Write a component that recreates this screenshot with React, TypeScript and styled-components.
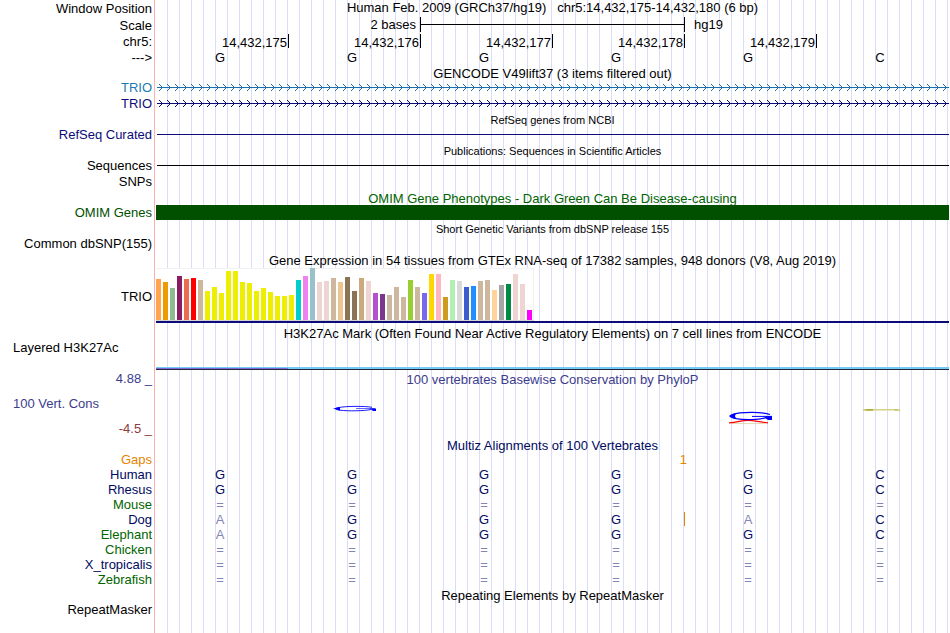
import React from "react";
import styled, { createGlobalStyle } from "styled-components";

const NAVY = "#0c0c78";
const DEEP = "#000a5f";
const GREEN = "#006400";
const ORANGE = "#e58400";

const GlobalStyle = createGlobalStyle`
  body {
    margin: 0;
    background: #fff;
    color: #000;
    font: 13px/15px "Liberation Sans", Arial, Helvetica, sans-serif;
  }
`;

const Page = styled.main`
  box-sizing: border-box;
  min-height: 100vh;
  padding-right: 1px;
  background:
    linear-gradient(#ffb0b0, #ffb0b0) 154px 0 / 1px 100% no-repeat,
    repeating-linear-gradient(to right, transparent 0 11px, #dcdcf6 11px 12px) 156px 0 no-repeat;
`;

const Row = styled.section<{ $height?: number }>`
  display: grid;
  grid-template-columns: 156px minmax(0, 1fr);
  min-height: ${(p) => p.$height ?? 16}px;
`;

const Label = styled.div<{ $color?: string; $line?: number; $middle?: boolean }>`
  padding-right: 4px;
  text-align: right;
  white-space: nowrap;
  color: ${(p) => p.$color ?? "inherit"};
  line-height: ${(p) => p.$line ?? 15}px;
  align-self: ${(p) => (p.$middle ? "center" : "start")};
`;

const SideLabel = styled.div<{ $color?: string }>`
  padding-left: 13px;
  color: ${(p) => p.$color ?? "inherit"};
`;

const Title = styled.h2<{ $small?: boolean; $color?: string }>`
  margin: 0;
  font-size: ${(p) => (p.$small ? 11 : 13)}px;
  font-weight: 400;
  height: 15px;
  line-height: ${(p) => (p.$small ? 16 : 17)}px;
  text-align: center;
  white-space: pre;
  color: ${(p) => p.$color ?? "inherit"};
`;

const WindowTitle = styled(Title)`
  line-height: 15px;
`;

const Bases = styled.div`
  display: grid;
  grid-template-columns: repeat(6, minmax(0, 1fr));
  padding-left: 1px;
`;

const ScaleText = styled.span<{ $end?: boolean }>`
  grid-column: span 2;
  padding: ${(p) => (p.$end ? "0 5px 0 0" : "0 0 0 9px")};
  text-align: ${(p) => (p.$end ? "right" : "left")};
`;

const ScaleBar = styled.span`
  grid-column: span 2;
  display: flex;
  align-items: center;
  height: 15px;
  margin-left: -1px;
  border: solid #000;
  border-width: 0 1px;

  &::before {
    content: "";
    flex: 1;
    height: 1px;
    background: #000;
  }
`;

const Coordinate = styled.span`
  height: 14px;
  line-height: 17px;
  padding-right: 1px;
  border-right: 1px solid #000;
  text-align: right;
`;

const Base = styled.span`
  padding-right: 6px;
  line-height: 15px;
  text-align: center;
`;

const Solid = styled.div<{ $color: string }>`
  height: 1px;
  margin: 7px 0 0 1px;
  background: ${(p) => p.$color};
`;

const ArrowSvg = styled.svg`
  display: block;
  width: calc(100% - 1px);
  height: 15px;
  margin-left: 1px;
`;

const OmimBar = styled.div`
  height: 15px;
  background: #005000;
`;

const Expression = styled.div`
  padding-top: 1px;
  border-bottom: 2px solid ${NAVY};
  margin-bottom: 2px;
`;

const Bars = styled.div`
  display: flex;
  align-items: flex-end;
  gap: 2px;
  width: max-content;
  height: 52px;
  padding-right: 2px;
  background: #fff;
  border-bottom: 1px solid #d4d4d4;
  box-shadow: inset 0 1px #f2f2f2, inset -1px 0 #f2f2f2;
`;

const Bar = styled.span`
  width: 5px;
`;

const Signal = styled.div`
  display: grid;
  grid-template-columns: minmax(0, 1fr) minmax(0, 5fr);
  align-self: end;
  margin-bottom: 1px;
  border-bottom: 1px solid #26263a;
`;

const SignalPart = styled.span<{ $lower: string }>`
  height: 1px;
  background: #73cbf7;
  border-bottom: 1px solid ${(p) => p.$lower};
`;

const ConservationLabels = styled.div`
  display: flex;
  flex-direction: column;
  justify-content: space-between;
  padding: 10px 0 1px;
`;

const LowerLimit = styled(Label)`
  align-self: end;
`;

const LogoCell = styled.div`
  display: flex;
  justify-content: center;
`;

const Alignment = styled.table`
  width: 100%;
  table-layout: fixed;
  border-collapse: collapse;
`;

const Species = styled.th<{ $color: string }>`
  padding: 0 5px 0 0;
  font-weight: 400;
  text-align: right;
  color: ${(p) => p.$color};
`;

const SpeciesColumn = styled.col`
  width: 157px;
`;

const AlignedBase = styled.td<{ $faint?: boolean }>`
  position: relative;
  height: 15px;
  padding: 0 6px 0 0;
  text-align: center;
  color: ${(p) => (p.$faint ? "#8585b5" : DEEP)};
`;

const GapCount = styled.span`
  position: absolute;
  top: 0;
  right: -2px;
  color: ${ORANGE};
`;

const Insertion = styled.span`
  position: absolute;
  top: 0;
  right: 0;
  width: 1px;
  height: 14px;
  background: ${ORANGE};
`;

const sequence = ["G", "G", "G", "G", "G", "C"];
const coordinates = ["14,432,175", "14,432,176", "14,432,177", "14,432,178", "14,432,179"];

const brain = "#eeee00";
const tan = "#cdb79e";
const rose = "#eed5d2";

const tissues: [number, string][] = [
  [41, "#ffa54f"], [38, "#ee9a00"], [32, "#8fbc8f"], [44, "#8b1c62"], [41, "#ee6a50"],
  [42, "#ff0000"], [40, tan], [29, brain], [33, brain], [27, brain], [49, brain],
  [49, brain], [38, brain], [37, brain], [29, brain], [32, brain], [28, brain],
  [24, brain], [24, brain], [25, brain], [40, "#00cdcd"], [44, "#ee82ee"], [52, "#9ac0cd"],
  [38, rose], [39, rose], [42, tan], [38, "#eec591"], [43, "#8b7355"], [29, "#8b7355"],
  [42, "#cdaa7d"], [39, rose], [27, "#b452cd"], [26, "#7a378b"], [25, tan], [33, tan],
  [23, tan], [40, "#9acd32"], [33, tan], [27, "#7a67ee"], [46, "#ffd700"], [46, "#ffb6c1"],
  [23, "#cd9b1d"], [40, "#b4eeb4"], [39, "#d9d9d9"], [33, "#3a5fcd"], [34, "#1e90ff"],
  [39, tan], [40, tan], [30, "#ffd39b"], [35, "#a6a6a6"], [36, "#008b45"], [46, rose],
  [36, rose], [10, "#ff00ff"],
];

const species: { name: string; color: string; bases: string; insertion?: boolean }[] = [
  { name: "Human", color: DEEP, bases: "GGGGGC" },
  { name: "Rhesus", color: DEEP, bases: "GGGGGC" },
  { name: "Mouse", color: GREEN, bases: "======" },
  { name: "Dog", color: DEEP, bases: "AGGGAC", insertion: true },
  { name: "Elephant", color: GREEN, bases: "AGGGGC" },
  { name: "Chicken", color: GREEN, bases: "======" },
  { name: "X_tropicalis", color: DEEP, bases: "======" },
  { name: "Zebrafish", color: GREEN, bases: "======" },
];

function TitleRow({ text, small, color, label, labelColor }: {
  text: string; small?: boolean; color?: string; label?: string; labelColor?: string;
}) {
  return (
    <Row $height={15}>
      <Label $color={labelColor}>{label}</Label>
      <Title $small={small} $color={color}>{text}</Title>
    </Row>
  );
}

function Arrows({ color, id }: { color: string; id: string }) {
  return (
    <ArrowSvg shapeRendering="crispEdges" aria-hidden="true">
      <defs>
        <pattern id={id} width="8" height="15" patternUnits="userSpaceOnUse">
          <path
            fill={color}
            d="M0 7h8v1H0zM2 4h1v1H2zM3 5h1v1H3zM4 6h1v1H4zM4 8h1v1H4zM3 9h1v1H3zM2 10h1v1H2z"
          />
        </pattern>
      </defs>
      <rect width="100%" height="15" fill={`url(#${id})`} />
    </ArrowSvg>
  );
}

function Conservation({ column }: { column: number }) {
  return (
    <LogoCell>
      <svg width="44" height="51" viewBox="0 0 44 51" fill="none" aria-hidden="true">
        {column === 1 && (
          <g stroke="#0000ff">
            <path d="M39 21.3C32 20 12 20 5 21.7C1 22.6 2 23.6 7 24.2C15 25.2 31 25 38 23.5" strokeWidth="0.9" />
            <path d="M23 22.5H42" strokeWidth="0.6" />
            <path d="M37 22.4H43V25H40z" fill="#0000ff" stroke="none" />
            <path d="M0 22.5L7 21V24.5z" fill="#0000ff" stroke="none" />
          </g>
        )}
        {column === 4 && (
          <>
            <path d="M2 37.6H37" stroke="#c8c078" strokeWidth="0.6" />
            <path d="M0 36.8C9 36.4 12 34.4 19 34.4S30 36.4 39 36.8" stroke="#ff0000" strokeWidth="1.2" />
            <g stroke="#0000ff">
              <path d="M41 28.5C35 25.7 10 25.8 4 28.5C1 30 2 31.5 7 32.6C15 34 31 34 37 31.5" strokeWidth="1.2" />
              <path d="M23 30.4H43" />
              <path d="M37 30H43V34H39L36 32z" fill="#0000ff" stroke="none" />
              <path d="M0 30Q2 27.5 8 27Q4 30 8 33Q2 32.5 0 30z" fill="#0000ff" stroke="none" />
            </g>
          </>
        )}
        {column === 5 && (
          <>
            <path d="M1 24L8 23H34L40 24L34 24.6H8z" fill="#d4d287" />
            <path d="M1 24L6 23H12V24.7H6zM33 23.5H37L40 24.5H34z" fill="#b4b034" />
          </>
        )}
      </svg>
    </LogoCell>
  );
}

export default function App() {
  return (
    <>
      <GlobalStyle />
      <Page>
        <Row $height={17}>
          <Label $line={17}>Window Position</Label>
          <WindowTitle>{"Human Feb. 2009 (GRCh37/hg19)   chr5:14,432,175-14,432,180 (6 bp)"}</WindowTitle>
        </Row>
        <Row $height={17}>
          <Label $line={17}>Scale</Label>
          <Bases>
            <ScaleText $end>2 bases</ScaleText>
            <ScaleBar />
            <ScaleText>hg19</ScaleText>
          </Bases>
        </Row>
        <Row>
          <Label $line={16}>chr5:</Label>
          <Bases>
            {coordinates.map((c) => <Coordinate key={c}>{c}</Coordinate>)}
          </Bases>
        </Row>
        <Row $height={15}>
          <Label>---&gt;</Label>
          <Bases>
            {sequence.map((b, i) => <Base key={i}>{b}</Base>)}
          </Bases>
        </Row>

        <TitleRow text="GENCODE V49lift37 (3 items filtered out)" />
        <Row>
          <Label $color="#1a78b4">TRIO</Label>
          <Arrows color="#1a6eaa" id="arrows-light" />
        </Row>
        <Row>
          <Label $color={NAVY}>TRIO</Label>
          <Arrows color={NAVY} id="arrows-dark" />
        </Row>

        <TitleRow small text="RefSeq genes from NCBI" />
        <Row>
          <Label $color={NAVY}>RefSeq Curated</Label>
          <Solid $color={NAVY} />
        </Row>

        <TitleRow small text="Publications: Sequences in Scientific Articles" />
        <Row>
          <Label>Sequences</Label>
          <Solid $color="#000" />
        </Row>
        <Row>
          <Label>SNPs</Label>
        </Row>

        <TitleRow color={GREEN} text="OMIM Gene Phenotypes - Dark Green Can Be Disease-causing" />
        <Row>
          <Label $color="#005000">OMIM Genes</Label>
          <OmimBar />
        </Row>

        <TitleRow small text="Short Genetic Variants from dbSNP release 155" />
        <Row>
          <Label>Common dbSNP(155)</Label>
        </Row>

        <TitleRow text="Gene Expression in 54 tissues from GTEx RNA-seq of 17382 samples, 948 donors (V8, Aug 2019)" />
        <Row $height={58}>
          <Label $middle>TRIO</Label>
          <Expression>
            <Bars>
              {tissues.map(([height, background], i) => (
                <Bar key={i} style={{ height, background }} />
              ))}
            </Bars>
          </Expression>
        </Row>

        <TitleRow text="H3K27Ac Mark (Often Found Near Active Regulatory Elements) on 7 cell lines from ENCODE" />
        <Row $height={31}>
          <SideLabel>Layered H3K27Ac</SideLabel>
          <Signal>
            <SignalPart $lower="#7a6ad8" />
            <SignalPart $lower="#73cbf7" />
          </Signal>
        </Row>

        <TitleRow
          label="4.88 _"
          labelColor="#3c3c8c"
          color="#3c3c8c"
          text="100 vertebrates Basewise Conservation by PhyloP"
        />
        <Row $height={51}>
          <ConservationLabels>
            <SideLabel $color="#3c3c8c">100 Vert. Cons</SideLabel>
            <LowerLimit $color="#8c3c3c">-4.5 _</LowerLimit>
          </ConservationLabels>
          <Bases>
            {sequence.map((_, i) => <Conservation key={i} column={i} />)}
          </Bases>
        </Row>

        <TitleRow color={DEEP} text="Multiz Alignments of 100 Vertebrates" />
        <Alignment>
          <colgroup>
            <SpeciesColumn />
            <col span={6} />
          </colgroup>
          <tbody>
            <tr>
              <Species scope="row" $color={ORANGE}>Gaps</Species>
              {sequence.map((_, i) => (
                <AlignedBase key={i}>{i === 3 && <GapCount>1</GapCount>}</AlignedBase>
              ))}
            </tr>
            {species.map((s) => (
              <tr key={s.name}>
                <Species scope="row" $color={s.color}>{s.name}</Species>
                {s.bases.split("").map((b, i) => (
                  <AlignedBase key={i} $faint={b === "=" || b === "A"}>
                    {b}
                    {s.insertion && i === 3 && <Insertion />}
                  </AlignedBase>
                ))}
              </tr>
            ))}
          </tbody>
        </Alignment>

        <TitleRow text="Repeating Elements by RepeatMasker" />
        <Row>
          <Label>RepeatMasker</Label>
        </Row>
      </Page>
    </>
  );
}
